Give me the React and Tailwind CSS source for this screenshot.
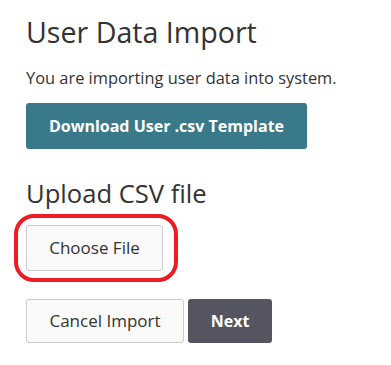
export default function App() {
  return (
    <div className="min-h-screen bg-white text-[#333333]" style={{ fontFamily: '"Open Sans", sans-serif' }}>
      <div className="pl-[26px] pt-[13px]">
        <h1 className="text-[28.6px] leading-[38px] font-normal">User Data Import</h1>
        <p className="mt-[16px] text-[16.4px] leading-[22px]">You are importing user data into system.</p>
        <button className="mt-[14px] h-[46px] w-[281px] rounded-[3px] bg-[#3a7989] text-white text-[16px] font-bold">
          Download User .csv Template
        </button>
        <h2 className="mt-[28px] text-[25.6px] leading-[34px] font-normal">Upload CSV file</h2>
        <div className="relative mt-[14px] w-[137px]">
          <div className="absolute -left-[12px] -top-[11px] w-[164px] h-[68px] rounded-[20px] border-[4px] border-[#ed1c24]" />
          <button className="relative h-[46px] w-[137px] rounded-[3px] border border-[#cccccc] bg-[#fafafa] text-[17px]">
            Choose File
          </button>
        </div>
        <div className="mt-[28px] flex gap-[4px]">
          <button className="h-[44px] w-[158px] rounded-[3px] border border-[#cccccc] bg-[#fafafa] text-[17px]">
            Cancel Import
          </button>
          <button className="h-[44px] w-[84px] rounded-[3px] bg-[#555562] text-white text-[16px] font-bold">
            Next
          </button>
        </div>
      </div>
    </div>
  );
}
